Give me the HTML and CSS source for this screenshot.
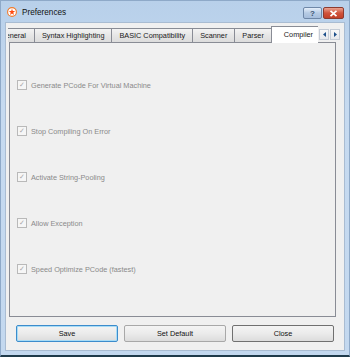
FILE: index.html
```html
<!DOCTYPE html>
<html lang="en">
<head>
  <meta charset="UTF-8">
  <title>Preferences</title>
  <link rel="stylesheet" href="styles.css">
</head>
<body>

  <div class="window">
    <!-- Title bar -->
    <div class="titlebar">
      <svg class="app-icon" width="10" height="10" viewBox="0 0 10 10">
        <circle cx="5" cy="5" r="4.4" fill="#fff" stroke="#f07a2a" stroke-width="1.1"/>
        <polygon points="5,1.8 5.8,4.1 8.2,4.1 6.3,5.5 7,7.9 5,6.4 3,7.9 3.7,5.5 1.8,4.1 4.2,4.1" fill="#ff4a10"/>
      </svg>
      <span class="title">Preferences</span>
      <div class="caption-buttons">
        <div class="cap-btn help">?</div>
        <div class="cap-btn close">
          <svg width="9" height="7" viewBox="0 0 9 7">
            <path d="M1.5 0.8 L7.5 6.2 M7.5 0.8 L1.5 6.2" stroke="#fff" stroke-width="1.7"/>
          </svg>
        </div>
      </div>
    </div>

    <!-- Client area -->
    <div class="client">
      <div class="tab-row">
        <div class="tab-viewport">
          <div class="tab-strip">
            <div class="tab first">General</div>
            <div class="tab">Syntax Highlighting</div>
            <div class="tab">BASIC Compatibility</div>
            <div class="tab">Scanner</div>
            <div class="tab">Parser</div>
            <div class="tab active">Compiler</div>
          </div>
        </div>
        <div class="tab-arrows">
          <div class="arrow">
            <svg width="3" height="5" viewBox="0 0 3 5"><polygon points="3,0 0,2.5 3,5" fill="#1d4f8a"/></svg>
          </div>
          <div class="arrow">
            <svg width="3" height="5" viewBox="0 0 3 5"><polygon points="0,0 3,2.5 0,5" fill="#1d4f8a"/></svg>
          </div>
        </div>
      </div>

      <div class="panel">
        <label class="option"><span class="check">&#10003;</span>Generate PCode For Virtual Machine</label>
        <label class="option"><span class="check">&#10003;</span>Stop Compiling On Error</label>
        <label class="option"><span class="check">&#10003;</span>Activate String-Pooling</label>
        <label class="option"><span class="check">&#10003;</span>Allow Exception</label>
        <label class="option"><span class="check">&#10003;</span>Speed Optimize PCode (fastest)</label>
      </div>

      <div class="button-row">
        <button class="btn default">Save</button>
        <button class="btn soft">Set Default</button>
        <button class="btn">Close</button>
      </div>
    </div>
  </div>

</body>
</html>
```

FILE: styles.css
```css
body {
  margin: 0;
  padding: 0;
  background: #ffffff;
  font-family: 'Liberation Sans', Arial, sans-serif;
  font-size: 7.3px;
  color: #1a1a1a;
}

.window {
  width: 350px;
  height: 357px;
  box-sizing: border-box;
  background: linear-gradient(180deg, #b8d0ea, #c6daf0 30%, #c3d8ef);
  border: 1px solid #8ea9c8;
  border-bottom: 2px solid #1f3a4a;
  display: flex;
  flex-direction: column;
}

/* Title bar */
.titlebar {
  height: 20px;
  display: flex;
  align-items: center;
  padding-left: 6px;
  padding-top: 1px;
}

.app-icon {
  margin-right: 5px;
}

.title {
  font-size: 8.2px;
  color: #111;
}

.caption-buttons {
  margin-left: auto;
  margin-right: 5px;
  display: flex;
  gap: 1px;
  align-self: flex-start;
  margin-top: 5px;
}

.cap-btn {
  height: 10px;
  border: 1px solid #6f88a8;
  border-radius: 2px;
  display: flex;
  align-items: center;
  justify-content: center;
  font-size: 8px;
  font-weight: bold;
}

.cap-btn.help {
  width: 17px;
  background: linear-gradient(180deg, #e4eefa, #b6cbe4 50%, #a6bedc);
  color: #3b5370;
}

.cap-btn.close {
  width: 19px;
  border-color: #8c3b30;
  background: linear-gradient(180deg, #eaa290, #d0533c 50%, #c23f28);
}

/* Client area */
.client {
  flex: 1;
  margin: 0 4px 4px 4px;
  background: #f0f0f0;
  border: 1px solid #a9bcd2;
  display: flex;
  flex-direction: column;
  padding: 3px 4px 0 2px;
}

.tab-row {
  display: flex;
  align-items: flex-start;
  height: 16px;
  position: relative;
  z-index: 2;
}

.tab-viewport {
  width: 313px;
  height: 17px;
  overflow: hidden;
}

.tab-strip {
  display: flex;
  align-items: flex-end;
  height: 16px;
  margin-left: -16px;
}

.tab {
  height: 13px;
  line-height: 13px;
  padding: 0 7px;
  border: 1px solid #898c95;
  border-bottom: none;
  margin-right: -1px;
  background: linear-gradient(180deg, #f3f3f3, #e6e6e6 50%, #dcdcdc);
  white-space: nowrap;
}

.tab.first {
  padding-right: 8px;
}

.tab.active {
  height: 16px;
  line-height: 15px;
  margin-bottom: -1px;
  padding: 0 11px 0 12px;
  background: #ffffff;
  position: relative;
  z-index: 1;
}

.tab-arrows {
  display: flex;
  gap: 1px;
  margin-left: 1px;
  margin-top: 3px;
}

.arrow {
  width: 8px;
  height: 9px;
  border: 1px solid #c5ccd6;
  background: linear-gradient(180deg, #f8f8f8, #e6e8ec);
  display: flex;
  align-items: center;
  justify-content: center;
}

/* Page panel */
.panel {
  box-sizing: border-box;
  height: 275px;
  margin-left: 1px;
  margin-right: 4px;
  border: 1px solid #898c95;
  background: #f0f0f0;
  padding-top: 19px;
  display: flex;
  flex-direction: column;
}

.option {
  height: 46px;
  flex-shrink: 0;
  display: flex;
  align-items: center;
  padding-left: 7px;
  color: #8a8a8a;
}

.check {
  width: 8px;
  height: 8px;
  border: 1px solid #b9b9b9;
  background: #f6f6f6;
  margin-right: 4px;
  font-size: 7px;
  line-height: 8px;
  text-align: center;
  color: #a8a8a8;
}

/* Dialog buttons */
.button-row {
  display: flex;
  gap: 6px;
  padding: 0 6px 0 8px;
  margin-top: 8px;
}

.btn {
  flex: 1;
  height: 17px;
  font-family: 'Liberation Sans', Arial, sans-serif;
  font-size: 7.3px;
  color: #111;
  border: 1px solid #707070;
  border-radius: 2px;
  background: linear-gradient(180deg, #f4f4f4, #ebebeb 50%, #dcdcdc);
  padding: 0;
}

.btn.default {
  border-color: #3c8ccc;
  box-shadow: inset 0 0 0 1px #a8dcf6;
}

.btn.soft {
  border-color: #a8a8a8;
}
```
